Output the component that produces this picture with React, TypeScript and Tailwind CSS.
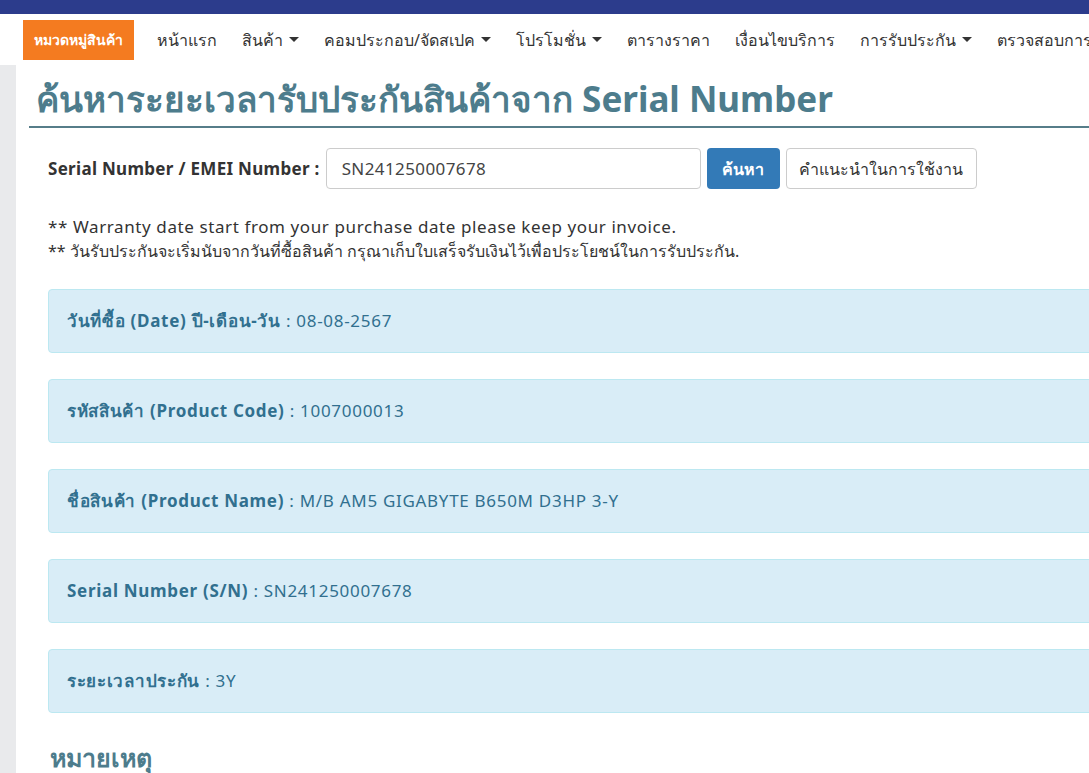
import React from "react";

const navItems: { label: string; caret?: boolean }[] = [
  { label: "หน้าแรก" },
  { label: "สินค้า", caret: true },
  { label: "คอมประกอบ/จัดสเปค", caret: true },
  { label: "โปรโมชั่น", caret: true },
  { label: "ตารางราคา" },
  { label: "เงื่อนไขบริการ" },
  { label: "การรับประกัน", caret: true },
  { label: "ตรวจสอบการซ่อม" },
];

const results = [
  { label: "วันที่ซื้อ (Date) ปี-เดือน-วัน", value: "08-08-2567" },
  { label: "รหัสสินค้า (Product Code)", value: "1007000013" },
  { label: "ชื่อสินค้า (Product Name)", value: "M/B AM5 GIGABYTE B650M D3HP 3-Y" },
  { label: "Serial Number (S/N)", value: "SN241250007678" },
  { label: "ระยะเวลาประกัน", value: "3Y" },
];

function Caret() {
  return (
    <span className="ml-[6px] inline-block h-0 w-0 border-x-[5px] border-t-[5px] border-x-transparent border-t-[#333] align-middle" />
  );
}

export default function App() {
  return (
    <div className="h-[773px] w-[1089px] overflow-hidden bg-white font-['Noto_Sans',sans-serif] text-[#333]">
      {/* top strip */}
      <div className="h-[14px] bg-[#2c3c8c]" />

      {/* nav */}
      <div className="flex h-[51px] items-center whitespace-nowrap pl-[23px]">
        <div className="flex h-[40px] items-center bg-[#f47b20] px-[11px] text-[14px] font-bold text-white">
          หมวดหมู่สินค้า
        </div>
        <div className="ml-[23px] flex items-center gap-[25px] text-[16px] text-[#333]">
          {navItems.map((item) => (
            <span key={item.label} className="flex items-center">
              {item.label}
              {item.caret && <Caret />}
            </span>
          ))}
        </div>
      </div>

      <div className="flex">
        {/* left gray strip */}
        <div className="h-[708px] w-[16px] shrink-0 bg-[#e9eaec]" />

        <div className="w-[1200px] shrink-0 pl-[13px]">
          <h1 className="border-b-2 border-[#567d89] pb-[6px] pl-[7px] pt-[13px] text-[35px] font-bold leading-[42px] text-[#4d7c8c]">
            ค้นหาระยะเวลารับประกันสินค้าจาก Serial Number
          </h1>

          <div className="pl-[19px]">
            {/* search row */}
            <div className="mt-[20px] flex items-center">
              <span className="text-[17px] font-bold tracking-[0.3px] text-[#333]">
                Serial Number / EMEI Number :
              </span>
              <div className="ml-[6px] flex h-[41px] w-[375px] items-center rounded-[4px] border border-[#ccc] px-[15px] text-[17px] tracking-[0.4px] text-[#444]">
                SN241250007678
              </div>
              <button className="ml-[6px] h-[41px] w-[73px] rounded-[4px] bg-[#337ab7] text-[16px] font-bold text-white">
                ค้นหา
              </button>
              <button className="ml-[6px] h-[41px] w-[191px] rounded-[4px] border border-[#ccc] bg-white text-[16px] text-[#333]">
                คำแนะนำในการใช้งาน
              </button>
            </div>

            {/* notes */}
            <div className="mt-[26px] leading-[24px]">
              <p className="text-[17px] tracking-[0.6px] text-[#333]">
                ** Warranty date start from your purchase date please keep your invoice.
              </p>
              <p className="text-[16px] text-[#333]">
                ** วันรับประกันจะเริ่มนับจากวันที่ซื้อสินค้า กรุณาเก็บใบเสร็จรับเงินไว้เพื่อประโยชน์ในการรับประกัน.
              </p>
            </div>

            {/* results */}
            <div className="mt-[26px] flex flex-col gap-[26px]">
              {results.map((r, i) => (
                <div
                  key={i}
                  className="h-[64px] rounded-[4px] border border-[#bce8f1] bg-[#d9edf7] px-[18px] text-[17px] leading-[62px] tracking-[0.7px] text-[#31708f]"
                >
                  <span className="font-bold">{r.label}</span> : {r.value}
                </div>
              ))}
            </div>

            <h2 className="mt-[26px] pl-[2px] text-[25px] font-bold text-[#4d7c8c]">
              หมายเหตุ
            </h2>
          </div>
        </div>
      </div>
    </div>
  );
}
